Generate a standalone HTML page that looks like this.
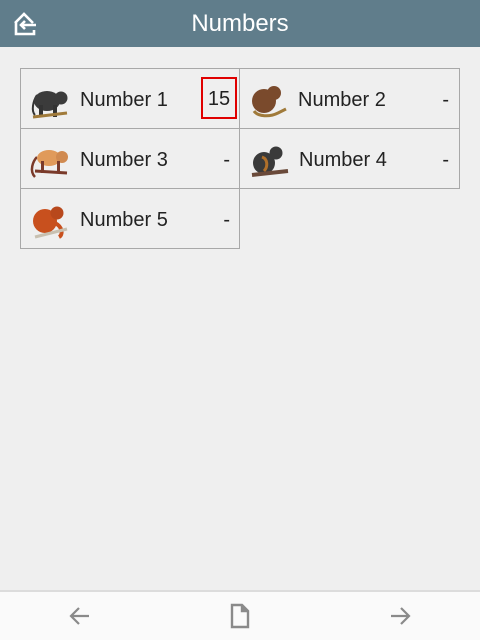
<!DOCTYPE html>
<html><head><meta charset="utf-8"><style>
*{box-sizing:border-box;margin:0;padding:0}
body{width:480px;height:640px;background:#efefef;font-family:"Liberation Sans",sans-serif;position:relative;overflow:hidden}
.hdr{position:absolute;left:0;top:0;width:480px;height:47px;background:#607d8b;color:#fff;font-size:24px;text-align:center;line-height:48px}
.cell{position:absolute;width:221px;height:61px;border:1px solid #a8a8a8;background:#efefef}
.cell .t{position:absolute;top:20px;font-size:20px;color:#222}
.cell .v{position:absolute;right:10px;top:20px;font-size:20px;color:#222}
.cell svg{position:absolute;left:8px;top:12px}
.box{position:absolute;left:180px;top:8px;width:36px;height:42px;border:2px solid #e00000;font-size:20px;text-align:center;line-height:40px;color:#222}
.ftr{position:absolute;left:0;top:590px;width:480px;height:50px;background:#fafafa;border-top:2px solid #dcdcdc}
</style></head><body>
<div class="hdr">Numbers
<svg style="position:absolute;left:12px;top:11px" width="26" height="26" viewBox="0 0 26 26" fill="none" stroke="#fff" stroke-width="2.6"><path d="M3 12 L12 3 L21 12 M4 11 V23 H22 V19"/><path d="M24 14 H9 M13 10 L9 14 L13 18"/></svg>
</div>

<div class="cell" style="left:20px;top:68px">
<svg width="44" height="40" viewBox="0 0 44 40"><path d="M6 34 C2 30 4 20 8 14" stroke="#333" stroke-width="2" fill="none"/><ellipse cx="18" cy="20" rx="13" ry="10" fill="#3b3b3b"/><circle cx="32" cy="17" r="6.5" fill="#3b3b3b"/><rect x="10" y="24" width="4" height="12" fill="#333"/><rect x="24" y="24" width="4" height="12" fill="#333"/><path d="M4 36 L38 32" stroke="#a07a3a" stroke-width="3"/></svg>
<span class="t" style="left:59px">Number 1</span><div class="box">15</div></div>

<div class="cell" style="left:239px;top:68px">
<svg width="44" height="40" viewBox="0 0 44 40"><ellipse cx="16" cy="20" rx="12" ry="12" fill="#7a4a2c"/><circle cx="26" cy="12" r="7" fill="#7a4a2c"/><path d="M6 30 C10 36 22 36 30 32 L38 28" stroke="#a07a3a" stroke-width="3" fill="none"/></svg>
<span class="t" style="left:58px">Number 2</span><span class="v">-</span></div>

<div class="cell" style="left:20px;top:128px">
<svg width="44" height="40" viewBox="0 0 44 40"><path d="M6 36 C0 30 4 20 8 16" stroke="#7a3a2a" stroke-width="2.5" fill="none"/><ellipse cx="20" cy="17" rx="12" ry="8" fill="#e09a5a"/><circle cx="33" cy="16" r="6" fill="#d08a50"/><rect x="12" y="20" width="3" height="12" fill="#7a3a2a"/><rect x="28" y="20" width="3" height="12" fill="#7a3a2a"/><path d="M6 30 L38 32" stroke="#7a3a2a" stroke-width="3"/></svg>
<span class="t" style="left:59px">Number 3</span><span class="v">-</span></div>

<div class="cell" style="left:239px;top:128px">
<svg width="44" height="40" viewBox="0 0 44 40"><ellipse cx="16" cy="22" rx="11" ry="11" fill="#3a3a3a"/><circle cx="28" cy="12" r="6.5" fill="#3a3a3a"/><path d="M14 16 C20 18 20 26 16 30" stroke="#b0702a" stroke-width="3" fill="none"/><path d="M4 34 L40 30" stroke="#6a4a3a" stroke-width="4"/></svg>
<span class="t" style="left:59px">Number 4</span><span class="v">-</span></div>

<div class="cell" style="left:20px;top:188px;width:220px">
<svg width="44" height="40" viewBox="0 0 44 40"><ellipse cx="16" cy="20" rx="12" ry="12" fill="#c8501e"/><circle cx="28" cy="12" r="6.5" fill="#b8481c"/><path d="M26 22 C34 26 34 34 30 36" stroke="#c8501e" stroke-width="4" fill="none"/><path d="M6 36 L38 28" stroke="#c8c0b0" stroke-width="3"/></svg>
<span class="t" style="left:59px">Number 5</span><span class="v" style="right:9px">-</span></div>

<div class="ftr">
<svg style="position:absolute;left:69px;top:14px" width="22" height="20" viewBox="0 0 22 20" fill="none" stroke="#8a8a8a" stroke-width="2.2"><path d="M20 10 H2 M10 2 L2 10 L10 18"/></svg>
<svg style="position:absolute;left:229px;top:11px" width="22" height="26" viewBox="0 0 22 26" fill="none" stroke="#8a8a8a" stroke-width="2.4"><path d="M3 2 H13 L19 8 V24 H3 Z"/><path d="M13 2 V8 H19" fill="#8a8a8a"/></svg>
<svg style="position:absolute;left:389px;top:14px" width="22" height="20" viewBox="0 0 22 20" fill="none" stroke="#8a8a8a" stroke-width="2.2"><path d="M2 10 H20 M12 2 L20 10 L12 18"/></svg>
</div>
</body></html>
